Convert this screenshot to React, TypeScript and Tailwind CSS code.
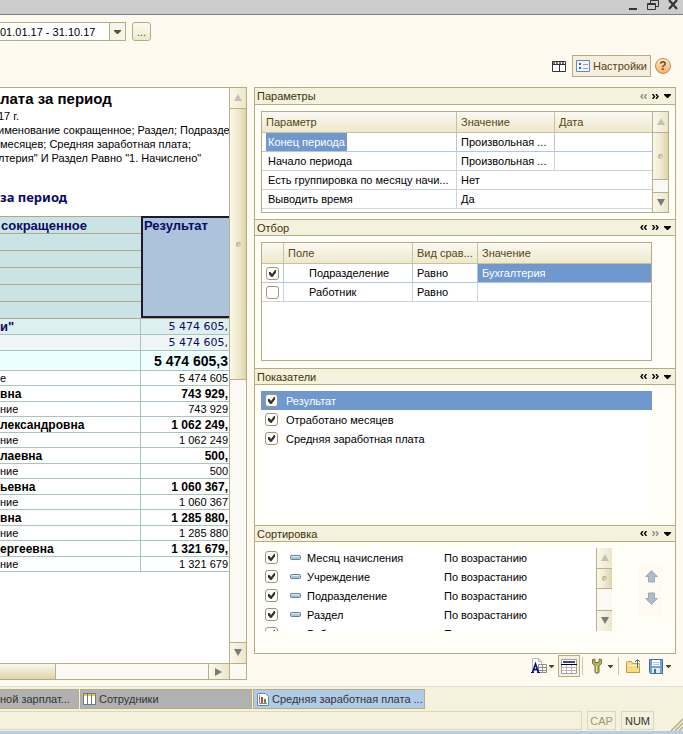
import type { ReactNode } from "react"
import clsx from "clsx"

const reportRows = [
  { name: 'и"', value: "5 474 605,", kind: "org" },
  { name: "", value: "5 474 605,", kind: "dept" },
  { name: "", value: "5 474 605,3", kind: "total" },
  { name: "е", value: "5 474 605", kind: "item" },
  { name: "вна", value: "743 929,", kind: "person" },
  { name: "ние", value: "743 929", kind: "item" },
  { name: "лександровна", value: "1 062 249,", kind: "person" },
  { name: "ние", value: "1 062 249", kind: "item" },
  { name: "лаевна", value: "500,", kind: "person" },
  { name: "ние", value: "500", kind: "item" },
  { name: "ьевна", value: "1 060 367,", kind: "person" },
  { name: "ние", value: "1 060 367", kind: "item" },
  { name: "вна", value: "1 285 880,", kind: "person" },
  { name: "ние", value: "1 285 880", kind: "item" },
  { name: "ергеевна", value: "1 321 679,", kind: "person" },
  { name: "ние", value: "1 321 679", kind: "item" },
]

const rowStyles: Record<string, string> = {
  org: "h-[17px] bg-[#deeff1] text-[#0a0a66] *:border-t *:border-t-[#b0aa84]",
  dept: "h-4 bg-[#eef6f5] text-[#0a0a66]",
  total: "h-5 bg-[#eeffff] font-bold",
  item: "h-[15px] text-[11px]",
  person: "h-4 text-[12px] font-bold",
}

const valueStyles: Record<string, string> = {
  org: "font-['DejaVu_Sans'] text-[11px]",
  dept: "font-['DejaVu_Sans'] text-[11px]",
  total: "text-[14px]",
  item: "",
  person: "",
}

const params = [
  { name: "Конец периода", value: "Произвольная ...", dated: true },
  { name: "Начало периода", value: "Произвольная ...", dated: true },
  { name: "Есть группировка по месяцу начи...", value: "Нет", dated: false },
  { name: "Выводить время", value: "Да", dated: false },
]

const sorting = ["Месяц начисления", "Учреждение", "Подразделение", "Раздел", "Работник"]

const headCell = "border-r border-b border-[#c9c19a] bg-linear-to-b from-[#fbfaf4] to-[#eee8cc] text-left font-normal text-[#5a4310]"

function Triangle({ dir, className }: { dir: "up" | "down" | "right"; className?: string }) {
  const points = { up: "0,7 4,0 8,7", down: "0,0 8,0 4,7", right: "0,0 7,4 0,8" }
  return (
    <svg width="8" height="8" viewBox="0 0 8 8" fill="currentColor" className={className} aria-hidden="true">
      <polygon points={points[dir]} />
    </svg>
  )
}

function Caret({ className }: { className?: string }) {
  return (
    <svg width="7" height="4" viewBox="0 0 7 4" fill="currentColor" className={className} aria-hidden="true">
      <path d="M0 0h7v1L4 4H3L0 1z" />
    </svg>
  )
}

function ScrollButton({ dir, label, dim, className }: { dir: "up" | "down" | "right"; label: string; dim?: boolean; className?: string }) {
  return (
    <button
      type="button"
      aria-label={label}
      className={clsx(
        "flex shrink-0 items-center justify-center border-[#b9b08a] bg-linear-to-r from-[#faf8ee] to-[#ece6c8]",
        dim ? "text-[#c4c1b2]" : "text-[#7a7a7a]",
        className,
      )}
    >
      <Triangle dir={dir} />
    </button>
  )
}

function ScrollThumb({ className }: { className: string }) {
  return (
    <div className={clsx("flex shrink-0 items-center justify-center border-b border-[#b9b08a] bg-linear-to-r from-[#faf8ea] via-[#f0ebd0] to-[#ddd4a8]", className)}>
      <span className="size-[5px] rounded-full border-t border-l border-[#b3ad91] bg-[#d6d0b3]" />
    </div>
  )
}

function Check({ label, id, checked = true }: { label?: string; id?: string; checked?: boolean }) {
  return (
    <span className="relative block size-[13px] shrink-0">
      <input
        id={id}
        type="checkbox"
        aria-label={label}
        defaultChecked={checked}
        className="peer block size-[13px] appearance-none rounded-[3px] border border-[#a1966c] bg-white"
      />
      <svg viewBox="0 0 13 13" className="pointer-events-none absolute inset-0 hidden size-[13px] peer-checked:block" fill="#333333" aria-hidden="true">
        <path d="M3 5h1.5l1.5 2L9 3h1v2.5L6.5 10h-1L3 7.500z" />
      </svg>
    </span>
  )
}

function Chevrons({ dir, dim }: { dir: "left" | "right"; dim?: boolean }) {
  return (
    <svg width="7" height="5" viewBox="0 0 7 5" fill="none" stroke={dim ? "#8e8e86" : "#000000"} strokeWidth="1.4" aria-hidden="true">
      {dir === "left" ? <path d="M3 0 1 2.500l2 2.500M6.500 0l-2 2.500 2 2.500" /> : <path d="m.5 0 2 2.500-2 2.500M4 0l2 2.500L4 5" />}
    </svg>
  )
}

function Section({ title, first, last, className, children }: { title: string; first?: boolean; last?: boolean; className: string; children: ReactNode }) {
  return (
    <section className={className}>
      <header className={clsx("flex items-center justify-between border-y border-[#b5ac83] bg-[#f4f1dd] pr-1 pl-[2px]", first ? "h-[18px]" : "h-[17px]")}>
        <h2 className="text-[#3f3208]">{title}</h2>
        <div className="flex items-center gap-[5px]">
          <button type="button" aria-label="Предыдущая"><Chevrons dir="left" dim={first} /></button>
          <button type="button" aria-label="Следующая"><Chevrons dir="right" dim={last} /></button>
          <button type="button" aria-label="Меню раздела"><Caret /></button>
        </div>
      </header>
      <div className="px-[6px] pt-[6px]">{children}</div>
    </section>
  )
}

function Report() {
  return (
    <div className="flex h-[593px] w-[247px] shrink-0 flex-col border-y border-r border-[#b5ac83] bg-white">
      <div className="flex min-h-0 flex-1">
        <div className="min-w-0 flex-1 overflow-hidden whitespace-nowrap">
          <h1 className="h-[21px] text-[15px] leading-[22px] font-bold">лата за период</h1>
          <div className="-ml-[2px] h-[78px] text-[11px] leading-[14px]">
            <p>17 г.</p>
            <p>именование сокращенное; Раздел; Подраздел</p>
            <p className="pl-[2px]">месяцев; Средняя заработная плата;</p>
            <p>лтерия" И Раздел Равно "1. Начислено"</p>
          </div>
          <h2 className="h-[29px] font-['Noto_Sans'] text-[13px] leading-[20px] font-bold text-[#0a0a66]">за период</h2>
          <table className="w-full table-fixed border-separate border-spacing-0">
            <colgroup>
              <col className="w-[141px]" />
              <col />
            </colgroup>
            <thead className="text-[13px] leading-[15px] text-[#0a0a66]">
              <tr>
                <th className="h-[17px] border-t border-[#b0aa84] bg-[#cae4e5] p-0 pl-px text-left">сокращенное</th>
                <th rowSpan={6} className="border-y-2 border-l-2 border-[#20182c] bg-[#adc3dc] p-0 pl-px text-left align-top">
                  Результат
                </th>
              </tr>
              {[1, 2, 3, 4, 5].map((n) => (
                <tr key={n}>
                  <td className="h-[17px] border-t border-[#b0aa84] bg-[#cae4e5] p-0" />
                </tr>
              ))}
            </thead>
            <tbody className="text-[13px] leading-[14px]">
              {reportRows.map((row, i) => (
                <tr key={i} className={rowStyles[row.kind]}>
                  <td className={clsx("overflow-hidden border-r border-b border-[#a9c4ba] p-0", row.kind === "org" && "font-bold")}>{row.name}</td>
                  <td className={clsx("overflow-hidden border-b border-[#a9c4ba] p-0 pr-px text-right", valueStyles[row.kind])}>{row.value}</td>
                </tr>
              ))}
            </tbody>
          </table>
        </div>
        <div className="flex w-[17px] flex-col border-l border-[#b9b08a] bg-[#faf9f4]">
          <ScrollButton dir="up" label="Вверх" dim className="h-[21px] border-b" />
          <ScrollThumb className="h-[271px]" />
          <div className="flex-1" />
          <ScrollButton dir="down" label="Вниз" className="h-[21px] border-t" />
        </div>
      </div>
      <div className="flex h-4 border-t border-[#b9b08a] bg-[#faf9f4]">
        <div className="w-14 border-r border-[#b9b08a] bg-linear-to-b from-[#faf8ea] to-[#ddd4a8]" />
        <div className="flex-1" />
        <ScrollButton dir="right" label="Вправо" className="w-[22px] border-x" />
        <div className="w-4" />
      </div>
    </div>
  )
}

function ParamsTable() {
  return (
    <div className="flex h-[102px] border border-[#b5ac83] bg-white">
      <div className="min-w-0 flex-1 overflow-hidden">
        <table className="w-full table-fixed border-separate border-spacing-0">
          <colgroup>
            <col className="w-[195px]" />
            <col className="w-[98px]" />
            <col />
          </colgroup>
          <thead>
            <tr className="h-[21px]">
              <th className={clsx(headCell, "p-0 pl-1")}>Параметр</th>
              <th className={clsx(headCell, "p-0 pl-1")}>Значение</th>
              <th className={clsx(headCell, "border-r-0 p-0 pl-1")}>Дата</th>
            </tr>
          </thead>
          <tbody>
            {params.map((p, i) => (
              <tr key={p.name} className={clsx("h-[19px]", i === 0 ? "*:border-[#afc6e6]" : "*:border-[#cbd5d8]")}>
                <td className="truncate border-r border-b p-0 pl-1">
                  <span className={clsx("block h-[18px] w-fit px-[2px] leading-[18px]", i === 0 && "bg-[#6f98cf] text-white")}>{p.name}</span>
                </td>
                <td className={clsx("truncate border-b p-0 pl-1", p.dated && "border-r")}>{p.value}</td>
                <td className="border-b p-0" />
              </tr>
            ))}
          </tbody>
        </table>
      </div>
      <div className="flex w-4 flex-col border-l border-[#b9b08a] bg-[#faf9f4]">
        <ScrollButton dir="up" label="Вверх" dim className="h-[21px] border-b" />
        <ScrollThumb className="h-[47px]" />
        <div className="flex-1" />
        <ScrollButton dir="down" label="Вниз" className="h-5 border-t" />
      </div>
    </div>
  )
}

function FilterTable() {
  return (
    <div className="mr-[17px] h-[119px] border border-[#b5ac83] bg-white">
      <table className="w-full table-fixed border-separate border-spacing-0">
        <colgroup>
          <col className="w-[22px]" />
          <col className="w-[129px]" />
          <col className="w-[65px]" />
          <col />
        </colgroup>
        <thead>
          <tr className="h-[21px]">
            <th className={clsx(headCell, "p-0")} />
            <th className={clsx(headCell, "p-0 pl-1")}>Поле</th>
            <th className={clsx(headCell, "p-0 pl-1")}>Вид срав...</th>
            <th className={clsx(headCell, "border-r-0 p-0 pl-1")}>Значение</th>
          </tr>
        </thead>
        <tbody>
          <tr className="h-[19px] *:border-[#afc6e6]">
            <td className="border-r border-b p-0 pl-1"><Check label="Подразделение" /></td>
            <td className="border-r border-b p-0 pl-[25px]">Подразделение</td>
            <td className="border-r border-b p-0 pl-1">Равно</td>
            <td className="border-b bg-[#6f98cf] p-0 pl-1 text-white">Бухгалтерия</td>
          </tr>
          <tr className="h-[19px] *:border-[#cbd5e0]">
            <td className="border-r border-b p-0 pl-1"><Check label="Работник" checked={false} /></td>
            <td className="border-r border-b p-0 pl-[25px]">Работник</td>
            <td className="border-r border-b p-0 pl-1">Равно</td>
            <td className="border-b p-0" />
          </tr>
        </tbody>
      </table>
    </div>
  )
}

function Indicators() {
  return (
    <ul className="mr-[17px] h-[128px] bg-white">
      {["Результат", "Отработано месяцев", "Средняя заработная плата"].map((name, i) => (
        <li key={name} className={clsx("flex h-[19px] items-center gap-2 pl-1", i === 0 && "bg-[#6f98cf] text-white")}>
          <Check id={`indicator-${i}`} />
          <label htmlFor={`indicator-${i}`}>{name}</label>
        </li>
      ))}
    </ul>
  )
}

function Sorting() {
  return (
    <div className="flex">
      <ul className="h-[83px] min-w-0 flex-1 overflow-hidden bg-white">
        {sorting.map((name, i) => (
          <li key={name} className="flex h-[19px] items-center pl-1">
            <Check id={`sort-${i}`} />
            <svg width="11" height="5" viewBox="0 0 11 5" className="ml-3 shrink-0" aria-hidden="true">
              <rect x=".5" y=".5" width="10" height="4" rx="1" fill="#a9c6da" stroke="#62829c" />
              <path d="M1.500 1.500h8" stroke="#dcebf4" />
            </svg>
            <label htmlFor={`sort-${i}`} className="ml-[6px] w-[137px] shrink-0">{name}</label>
            <span>По возрастанию</span>
          </li>
        ))}
      </ul>
      <div className="flex h-[83px] w-4 flex-col border-l border-[#b9b08a] bg-[#faf9f4]">
        <ScrollButton dir="up" label="Вверх" dim className="h-[21px] border-b" />
        <ScrollThumb className="h-5" />
        <div className="flex-1" />
        <ScrollButton dir="down" label="Вниз" className="h-[21px] border-t" />
      </div>
      <div className="mt-4 mr-[6px] ml-[27px] flex h-[52px] w-6 flex-col items-center gap-[9px] bg-[#fffaf2] pt-[6px]">
        <button type="button" aria-label="Переместить вверх">
          <svg width="13" height="13" viewBox="0 0 13 13" fill="#aebdc8" stroke="#96a7b5" aria-hidden="true">
            <path d="M6.500.7 12.300 6.500H9.500v5.500h-6V6.500H.7z" />
          </svg>
        </button>
        <button type="button" aria-label="Переместить вниз">
          <svg width="13" height="13" viewBox="0 0 13 13" fill="#aebdc8" stroke="#96a7b5" aria-hidden="true">
            <path d="M6.500 12.300.7 6.500h2.800V1h6v5.500h2.800z" />
          </svg>
        </button>
      </div>
    </div>
  )
}

function SettingsToolbar() {
  return (
    <div className="mt-px flex h-[22px] items-center justify-end pr-[5px] text-[#5a4310]">
      <button type="button" aria-label="Оформление" className="flex items-center gap-[2px]">
        <svg width="16" height="16" viewBox="0 0 16 16" aria-hidden="true">
          <path d="M1.500.5h6l3 3v9h-9z" fill="#ffffff" stroke="#b8b8b8" />
          <path d="M7.500.5v3h3" fill="none" stroke="#b8b8b8" />
          <path d="M7.500 6.500h8v8h-8z" fill="#ffffff" stroke="#8d8d8d" />
          <path d="M7.500 9.500h8M7.500 12.500h8M11.500 6.500v8" stroke="#8d8d8d" />
          <path d="M1.500 14.500 4.500 6 7.500 14.500M2.500 11.500h4" fill="none" stroke="#0a1470" strokeWidth="1.700" />
          <path d="M0 14.500h3M6 14.500h3" stroke="#0a1470" />
        </svg>
        <Caret className="h-[3px] w-[5px]" />
      </button>
      <button type="button" aria-label="Заголовок таблицы" className="ml-1 flex h-[22px] w-[22px] items-center justify-center border border-[#b5ac83] bg-[#f6efe0]">
        <svg width="16" height="15" viewBox="0 0 16 15" aria-hidden="true">
          <path d="M.5.5h15v14H.5z" fill="#ffffff" stroke="#a0a0a0" />
          <path d="M2 2h12v2H2z" fill="#3a3f9a" />
          <path d="M0 5.500h16" stroke="#000000" />
          <path d="M1 8.500h14M1 11.500h14M5.500 6v8M10.500 6v8" stroke="#b5b5b5" />
        </svg>
      </button>
      <span className="ml-[2px] h-[18px] w-px bg-[#cbc6a8]" />
      <button type="button" aria-label="Настройка" className="ml-2 flex items-center gap-[5px]">
        <svg width="12" height="16" viewBox="0 0 12 16" aria-hidden="true">
          <path d="M1.500 1.500v4l2.500 2.500v6.500q2 1.500 4 0V8l2.500-2.500v-4L8 1v3.500H4V1z" fill="#b7b05a" stroke="#77743a" />
          <path d="M5.500 8v6" stroke="#e9e4a4" />
        </svg>
        <Caret className="h-[3px] w-[5px]" />
      </button>
      <span className="ml-[5px] h-[18px] w-px bg-[#cbc6a8]" />
      <button type="button" aria-label="Открыть" className="ml-[7px]">
        <svg width="15" height="16" viewBox="0 0 15 16" aria-hidden="true">
          <path d="M.5 4.500q0-1 1-1h4l1 2h7v9H.5z" fill="#f6dc83" stroke="#c79d3b" />
          <path d="M1.500 7.500h12" stroke="#fff3be" />
          <path d="M11.500 10V2M9 4l2.500-2.500L14 4" fill="none" stroke="#3f6f94" />
        </svg>
      </button>
      <button type="button" aria-label="Сохранить" className="ml-2 flex items-center gap-[3px]">
        <svg width="14" height="15" viewBox="0 0 14 15" aria-hidden="true">
          <path d="M.5.5h13v14h-12l-1-1z" fill="#72a0cf" stroke="#41709f" />
          <path d="M3 1h8v6H3z" fill="#ffffff" />
          <path d="M4 3.500h6M4 5.500h6" stroke="#b4c4d4" />
          <path d="M3 9h8v5H3z" fill="#e4eaf0" />
          <path d="M5 10h2v4H5z" fill="#41709f" />
        </svg>
        <Caret className="h-[3px] w-[5px]" />
      </button>
    </div>
  )
}

export default function App() {
  return (
    <div className="flex min-h-screen flex-col bg-[#fffaf0] font-['Liberation_Sans',sans-serif] text-[11px] leading-[14px] text-black">
      {/* Window caption */}
      <div className="flex h-[15px] shrink-0 justify-end gap-[9px] border-b border-[#7d7d7d] bg-[#cccccc] pr-[5px]">
        <button type="button" aria-label="Свернуть" className="flex">
          <svg width="10" height="14" viewBox="0 0 10 14" aria-hidden="true"><path d="M1 9h8" stroke="#333333" strokeWidth="2" /></svg>
        </button>
        <button type="button" aria-label="Восстановить" className="flex">
          <svg width="12" height="14" viewBox="0 0 12 14" fill="none" stroke="#333333" aria-hidden="true">
            <path d="M3.500 3V.5h8v6H9" />
            <path d="M.5 3.500h8v6h-8zM.5 4.500h8" />
          </svg>
        </button>
        <button type="button" aria-label="Закрыть" className="flex">
          <svg width="10" height="14" viewBox="0 0 10 14" aria-hidden="true"><path d="m1 0 8 9M9 0 1 9" stroke="#333333" strokeWidth="2.200" /></svg>
        </button>
      </div>

      {/* Period and form commands */}
      <div className="flex h-[72px] shrink-0 justify-between">
        <div className="mt-[7px] flex h-[19px] gap-[6px]">
          <div className="flex w-[126px] border border-l-0 border-[#b5ac83] bg-white">
            <input type="text" aria-label="Период" defaultValue="01.01.17 - 31.10.17" className="min-w-0 flex-1 outline-none" />
            <button type="button" aria-label="Выбрать период" className="flex w-4 items-center justify-center border-l border-[#b5ac83] bg-[#f7f4ec] text-[#6a5210]">
              <Caret />
            </button>
          </div>
          <button type="button" className="w-[19px] rounded-[3px] border border-[#b5ac83] bg-linear-to-b from-[#fbfaf0] to-[#eeeacf] text-[#5a4310]">...</button>
        </div>
        <div className="mt-10 flex h-[22px] items-center gap-1 pr-3">
          <button type="button" aria-label="Вид таблицы" className="mr-[2px]">
            <svg width="14" height="11" viewBox="0 0 14 11" aria-hidden="true">
              <path d="M.5.5h13v10H.5z" fill="#ffffff" stroke="#333333" />
              <path d="M1 2h12" stroke="#777777" strokeWidth="2" strokeDasharray="2 1" />
              <path d="M1 3.500h12M7.500 4v7" stroke="#333333" />
            </svg>
          </button>
          <button type="button" className="flex h-[22px] items-center gap-[3px] border border-[#b5ac83] bg-[#f6efe0] px-[3px] text-[#5a4310]">
            <svg width="14" height="12" viewBox="0 0 14 12" aria-hidden="true">
              <path d="M.5.5h13v11H.5z" fill="#f2f6ff" stroke="#6a86bd" />
              <path d="M3 3h2v2H3zM3 7h2v2H3z" fill="#3b5ca8" />
              <path d="M7 4.500h5M7 8.500h5" stroke="#8ba0c8" />
            </svg>
            Настройки
          </button>
          <button type="button" aria-label="Справка" className="flex size-4 items-center justify-center rounded-full border border-[#b98a55] bg-linear-to-b from-[#fdeccf] to-[#f2b261] text-[12px] font-bold text-[#7a4a18]">
            ?
          </button>
        </div>
      </div>

      <main className="flex gap-[7px] pr-[7px]">
        <Report />
        <div className="min-w-0 flex-1">
          <div className="border-x border-b border-[#b5ac83] bg-[#fffff8]">
            <Section title="Параметры" first className="h-[132px]"><ParamsTable /></Section>
            <Section title="Отбор" className="h-[149px]"><FilterTable /></Section>
            <Section title="Показатели" className="h-[157px]"><Indicators /></Section>
            <Section title="Сортировка" last className="h-[128px]"><Sorting /></Section>
          </div>
          <SettingsToolbar />
        </div>
      </main>

      {/* Open windows */}
      <nav className="mt-[6px] flex h-[23px] shrink-0 gap-px border-t border-[#dfdfdb] bg-[#f4f1dd] pt-[2px] text-[#333333]">
        <button type="button" className="h-5 w-[79px] border border-l-0 border-[#b5ac83] bg-[#b1b1b1] text-left whitespace-nowrap">ной зарплат...</button>
        <button type="button" className="flex h-5 w-[172px] items-center gap-[3px] border border-[#b5ac83] bg-[#b1b1b1] px-[2px] whitespace-nowrap">
          <svg width="13" height="12" viewBox="0 0 13 12" aria-hidden="true">
            <path d="M.5.5h12v11H.5z" fill="#ffffff" stroke="#65798d" />
            <path d="M1 1h11v2H1z" fill="#f1c93b" />
            <path d="M4.500 0v12M8.500 0v12" stroke="#65798d" />
          </svg>
          Сотрудники
        </button>
        <button type="button" className="flex h-5 w-[172px] items-center gap-[3px] border border-[#b5ac83] bg-[#b0cbe7] px-[3px] whitespace-nowrap">
          <svg width="12" height="13" viewBox="0 0 12 13" className="shrink-0" aria-hidden="true">
            <path d="M.5.5h8l3 3v9H.5z" fill="#ffffff" stroke="#6b86a6" />
            <path d="M2.500 2v8.500H10" fill="none" stroke="#8a8a8a" />
            <path d="M4 4h2v6H4z" fill="#d43c2c" />
            <path d="M7 6h2v4H7z" fill="#3d9b3f" />
          </svg>
          Средняя заработная плата ...
        </button>
      </nav>

      {/* Status bar */}
      <footer className="flex h-[22px] shrink-0 gap-[5px] bg-[#f4f1dd] pt-[2px]">
        <div className="h-[19px] flex-1 border border-l-0 border-[#dcd7bd]" />
        <span className="h-[19px] w-[29px] border border-[#dcd7bd] text-center leading-[18px] text-[#a8956b]">CAP</span>
        <span className="h-[19px] w-[33px] border border-[#dcd7bd] text-center leading-[18px] text-[#333333]">NUM</span>
        <svg width="24" height="13" viewBox="0 0 24 13" className="mt-[7px] shrink-0" stroke="#b5ac83" strokeWidth="1.500" aria-hidden="true">
          <path d="M12 13 24 1M16 13l8-8M20 13l4-4" />
        </svg>
      </footer>
      <div className="min-h-[3px] flex-1 bg-[#b5cde8]" />
    </div>
  )
}
